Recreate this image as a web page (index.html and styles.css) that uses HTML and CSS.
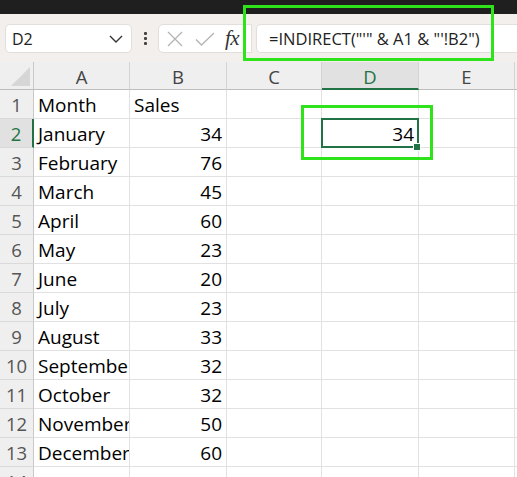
FILE: index.html
```html
<!DOCTYPE html>
<html>
<head>
<meta charset="utf-8">
<link rel="stylesheet" href="styles.css">
</head>
<body>
<div class="app">
  <div class="titlebar"></div>
  <div class="toolbar">
    <div class="namebox">
      <span class="name">D2</span>
      <svg class="chev" width="14" height="8" viewBox="0 0 14 8"><path d="M1 1 L7 7 L13 1" fill="none" stroke="#333" stroke-width="1.4"/></svg>
    </div>
    <div class="dots"><span></span><span></span><span></span></div>
    <div class="fxbox">
      <svg class="ico" width="16" height="16" viewBox="0 0 16 16"><path d="M1 1 L15 15 M15 1 L1 15" stroke="#b4b4b4" stroke-width="1.3" fill="none"/></svg>
      <svg class="ico" width="20" height="14" viewBox="0 0 20 14"><path d="M1 7.5 L6.5 13 L19 1" stroke="#b4b4b4" stroke-width="1.3" fill="none"/></svg>
      <span class="fx">fx</span>
    </div>
    <div class="formula">=INDIRECT("'" &amp; A1 &amp; "'!B2")</div>
  </div>
  <div class="sheet">
    <div class="corner"><svg width="34" height="28" viewBox="0 0 34 28"><path d="M30 5 L30 24 L11 24 Z" fill="#d6d6d6"/></svg></div>
    <div class="ch">A</div><div class="ch">B</div><div class="ch">C</div><div class="ch sel">D</div><div class="ch">E</div><div class="ch last"></div>

    <div class="rh">1</div><div class="c">Month</div><div class="c">Sales</div><div class="c"></div><div class="c"></div><div class="c"></div><div class="c last"></div>
    <div class="rh sel">2</div><div class="c">January</div><div class="c n">34</div><div class="c"></div><div class="c n active">34<span class="handle"></span></div><div class="c"></div><div class="c last"></div>
    <div class="rh">3</div><div class="c">February</div><div class="c n">76</div><div class="c"></div><div class="c"></div><div class="c"></div><div class="c last"></div>
    <div class="rh">4</div><div class="c">March</div><div class="c n">45</div><div class="c"></div><div class="c"></div><div class="c"></div><div class="c last"></div>
    <div class="rh">5</div><div class="c">April</div><div class="c n">60</div><div class="c"></div><div class="c"></div><div class="c"></div><div class="c last"></div>
    <div class="rh">6</div><div class="c">May</div><div class="c n">23</div><div class="c"></div><div class="c"></div><div class="c"></div><div class="c last"></div>
    <div class="rh">7</div><div class="c">June</div><div class="c n">20</div><div class="c"></div><div class="c"></div><div class="c"></div><div class="c last"></div>
    <div class="rh">8</div><div class="c">July</div><div class="c n">23</div><div class="c"></div><div class="c"></div><div class="c"></div><div class="c last"></div>
    <div class="rh">9</div><div class="c">August</div><div class="c n">33</div><div class="c"></div><div class="c"></div><div class="c"></div><div class="c last"></div>
    <div class="rh">10</div><div class="c">September</div><div class="c n">32</div><div class="c"></div><div class="c"></div><div class="c"></div><div class="c last"></div>
    <div class="rh">11</div><div class="c">October</div><div class="c n">32</div><div class="c"></div><div class="c"></div><div class="c"></div><div class="c last"></div>
    <div class="rh">12</div><div class="c">November</div><div class="c n">50</div><div class="c"></div><div class="c"></div><div class="c"></div><div class="c last"></div>
    <div class="rh">13</div><div class="c">December</div><div class="c n">60</div><div class="c"></div><div class="c"></div><div class="c"></div><div class="c last"></div>
    <div class="rh">14</div><div class="c"></div><div class="c"></div><div class="c"></div><div class="c"></div><div class="c"></div><div class="c last"></div>
  </div>
  <div class="mark mark-formula"></div>
  <div class="mark mark-cell"></div>
</div>
</body>
</html>
```

FILE: styles.css
```css
* { box-sizing: border-box; }
html, body { margin: 0; padding: 0; background: #fff; }
body { width: 517px; height: 477px; overflow: hidden; font-family: "Open Sans", "Noto Sans", sans-serif; }
.app { position: relative; width: 517px; height: 477px; overflow: hidden; }

.titlebar { height: 14px; background: #1f1f1f; }

.toolbar {
  height: 48px;
  background: #f3efec;
  display: flex;
  align-items: flex-start;
  padding: 10px 0 0 5px;
  white-space: nowrap;
}
.namebox {
  width: 127px; height: 29px;
  background: #fff;
  border: 1px solid #e2dedb;
  border-radius: 5px;
  display: flex; align-items: center; justify-content: space-between;
  padding: 0 8px 0 6px;
  flex: none;
}
.name { font-size: 16px; color: #222; }
.chev { margin-top: 1px; }
.dots {
  width: 26px; height: 29px; flex: none;
  display: flex; flex-direction: column; align-items: center; justify-content: center; gap: 2px;
}
.dots span { width: 3px; height: 3px; background: #444; border-radius: 1px; }
.fxbox {
  width: 94px; height: 29px; flex: none;
  background: #fff;
  border: 1px solid #e2dedb;
  border-radius: 5px 0 0 5px;
  display: flex; align-items: center;
  padding-left: 8px; gap: 12px;
}
.fx { font-family: "Liberation Serif", serif; font-style: italic; font-size: 21px; color: #333; margin-left: -2px; letter-spacing: -0.5px; }
.formula {
  margin-left: 4px;
  flex: 1; height: 29px;
  background: #fff;
  border: 1px solid #e2dedb;
  border-right: none;
  border-radius: 5px 0 0 5px;
  font-size: 16.5px; color: #222;
  padding-left: 12px; line-height: 27px;
}

.sheet {
  display: grid;
  grid-template-columns: 34px 96px 97px 95px 97px 96px 1fr;
  grid-template-rows: 28px repeat(14, 29px);
}
.corner { background: #efefef; border-right: 1px solid #c9c9c9; border-bottom: 1px solid #bdbdbd; }
.corner svg { display: block; }
.ch {
  background: #efefef;
  border-right: 1px solid #d4d4d4;
  border-bottom: 1px solid #bdbdbd;
  text-align: center; font-size: 18.5px; color: #444; line-height: 29px;
}
.ch.sel { background: #e1e1e1; color: #217346; border-bottom: 2px solid #217346; }
.rh {
  background: #efefef;
  border-right: 1px solid #c9c9c9;
  border-bottom: 1px solid #d9d9d9;
  text-align: center; font-size: 18.5px; color: #555; line-height: 30px;
}
.rh.sel { background: #e1e1e1; color: #217346; border-right: 2px solid #217346; }
.c {
  border-right: 1px solid #e1e1e1;
  border-bottom: 1px solid #e1e1e1;
  font-size: 19px; color: #000; line-height: 30px;
  padding: 0 4px 0 4px;
  overflow: hidden; white-space: nowrap;
}
.c.n { text-align: right; }
.c.last { border-right: none; }
.c.active { position: relative; overflow: visible; }
.c.active::after {
  content: ""; position: absolute;
  left: -1px; top: -1px; right: -1px; bottom: -1px;
  border: 2px solid #217346;
}
.handle {
  position: absolute; right: -3px; bottom: -4px;
  width: 6px; height: 6px; background: #217346; border: 1px solid #fff;
  z-index: 2; box-sizing: content-box;
}
.mark { position: absolute; border: 3px solid #2ee31a; pointer-events: none; }
.mark-formula { left: 243px; top: 5px; width: 251px; height: 56px; }
.mark-cell { left: 301px; top: 105px; width: 132px; height: 55px; }
```
